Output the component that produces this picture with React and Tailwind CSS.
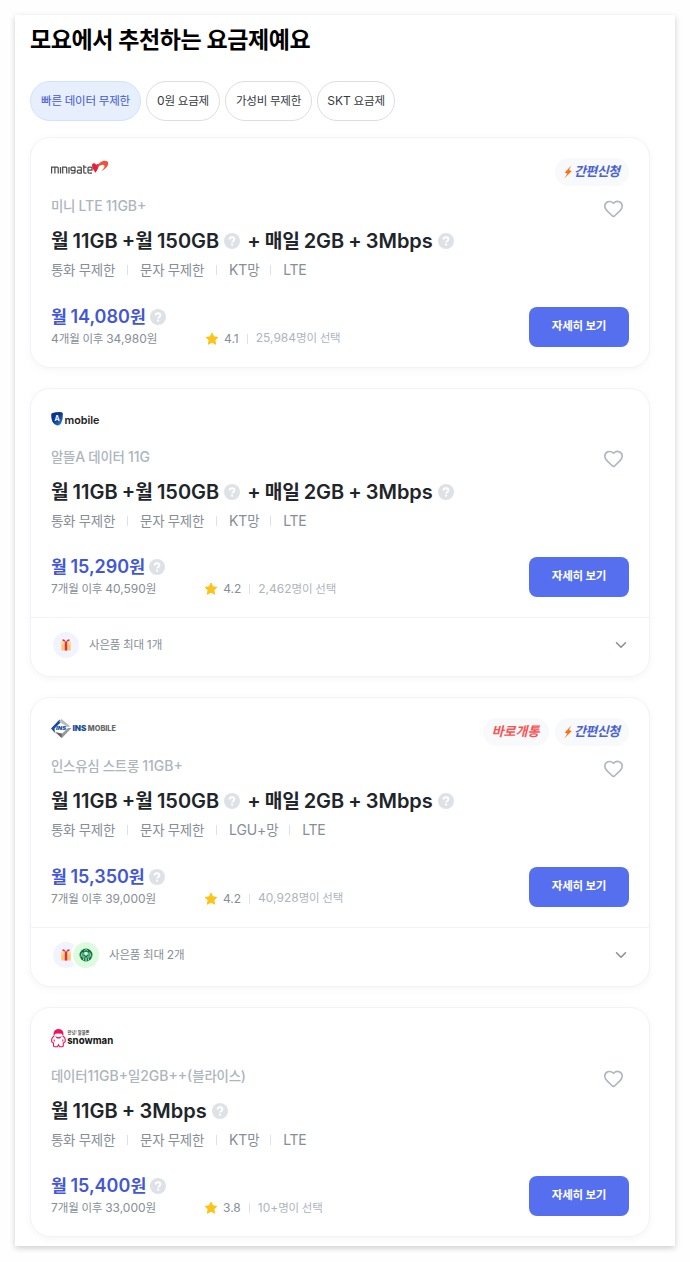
import React from 'react';
import { ChevronDown, Heart } from 'lucide-react';

const filters = [
  { label: '빠른 데이터 무제한', width: 'w-[111px]' },
  { label: '0원 요금제', width: 'w-[74px]' },
  { label: '가성비 무제한', width: 'w-[87px]' },
  { label: 'SKT 요금제', width: 'w-[78px]' },
];

const plans = [
  {
    logo: 'minigate',
    badges: ['easy'],
    name: '미니 LTE 11GB+',
    data: ['월 11GB +월 150GB', '+ 매일 2GB + 3Mbps'],
    network: 'KT망',
    price: '월 14,080원',
    after: '4개월 이후 34,980원',
    rating: '4.1',
    picked: '25,984명이 선택',
    gifts: [],
  },
  {
    logo: 'amobile',
    badges: [],
    name: '알뜰A 데이터 11G',
    data: ['월 11GB +월 150GB', '+ 매일 2GB + 3Mbps'],
    network: 'KT망',
    price: '월 15,290원',
    after: '7개월 이후 40,590원',
    rating: '4.2',
    picked: '2,462명이 선택',
    gifts: ['box'],
  },
  {
    logo: 'ins',
    badges: ['instant', 'easy'],
    name: '인스유심 스트롱 11GB+',
    data: ['월 11GB +월 150GB', '+ 매일 2GB + 3Mbps'],
    network: 'LGU+망',
    price: '월 15,350원',
    after: '7개월 이후 39,000원',
    rating: '4.2',
    picked: '40,928명이 선택',
    gifts: ['box', 'coffee'],
  },
  {
    logo: 'snowman',
    badges: [],
    name: '데이터11GB+일2GB++(블라이스)',
    data: ['월 11GB + 3Mbps'],
    network: 'KT망',
    price: '월 15,400원',
    after: '7개월 이후 33,000원',
    rating: '3.8',
    picked: '10+명이 선택',
    gifts: [],
  },
];

// Hangul sits a bit wide next to Inter, so its runs are tightened on their own
const Ko = ({ children }) =>
  children.split(/([가-힣]+)/).map((part, i) => (
    <span key={i} className={i % 2 ? 'text-[0.96em] tracking-[-0.018em]' : '[word-spacing:-0.04em]'}>{part}</span>
  ));

const Help = () => (
  <svg width="16" height="16" viewBox="0 0 16 16" className="shrink-0">
    <circle cx="8" cy="8" r="8" fill="#dee2e6" />
    <path d="M5.600 6.500C5.600 5 6.600 4.300 8 4.300s2.400.8 2.400 2c0 1-.6 1.400-1.300 1.900-.7.4-1 .7-1 1.400" fill="none" stroke="#fff" strokeWidth="1.900" />
    <circle cx="8.100" cy="11.700" r="1.150" fill="#fff" />
  </svg>
);

const Star = () => (
  <svg width="14" height="14" viewBox="0 0 14 14" className="shrink-0">
    <path d="M7 1.1l1.75 3.75 4.1.5-3 2.8.8 4.1L7 10.2l-3.65 2.05.8-4.1-3-2.8 4.1-.5z" fill="#fcc419" stroke="#fcc419" strokeLinejoin="round" />
  </svg>
);

const Divider = ({ className }) => <span className={`w-px bg-[#dee2e6] ${className}`} />;

const Logo = ({ type }) => {
  if (type === 'minigate') {
    return (
      <svg width="58" height="20" viewBox="0 0 58 20">
        <g fill="none" stroke="#4d4d4d" strokeWidth="1.250">
          <path d="M.6 15.500V9.100h5.600q1 0 1 1v5.400M3.900 9.100v6.400M9.500 9v6.500M11.700 15.500V9.100h3q1 0 1 1v5.400M18 9v6.500M24 9.100h-3q-1 0-1 1v1.400q0 1 1 1h3V9.100v4.900q0 1-1 1h-3M26.300 9.100h3q1 0 1 1V15h-3q-1 0-1-1v-1q0-1 1-1h3M32.800 7v7q0 1 1 1h1.700M32.800 9.100h2.700M37 12h4v-1.900q0-1-1-1h-2q-1 0-1 1V14q0 1 1 1h3" />
        </g>
        <path d="M41 7.500c0-2.500 2.800-3.200 4.300-.5.6-1 1.700-1.200 2.700-.5 0 2.500-1.300 5-3.500 8.300C43 12 41 10.500 41 7.500z" fill="#e81f3c" />
        <path d="M46 9.500C47.500 5 50.500 2.800 54 2.800c3.500 0 4 3 2.300 5.500-1.500 2.200-3.500 3.800-6 4.700 2.400-2 3.800-4.200 3-5.500-1-1.400-3.800-.6-7.300 2z" fill="#f0533a" />
      </svg>
    );
  }
  if (type === 'amobile') {
    return (
      <svg width="49" height="20" viewBox="0 0 49 20">
        <defs>
          <linearGradient id="shield" x1="0" x2="1" y2="1">
            <stop offset=".45" stopColor="#0b348f" />
            <stop offset="1" stopColor="#2997d8" />
          </linearGradient>
        </defs>
        <path d="M.2 5.500Q.2 4.300 1.500 4q4-1.200 9-.8 1.300.2 1.400 1.500.3 6-1.900 9.800-1.600 2.400-4 2-3.200-1-4.700-4Q0 9.500.2 5.500z" fill="url(#shield)" />
        <text x="3.600" y="11.900" fontFamily="Inter, sans-serif" fontWeight="700" fontSize="7" fill="#fff">A</text>
        <text x="13.500" y="14.800" textLength="35" lengthAdjust="spacingAndGlyphs" fontFamily="Inter, sans-serif" fontWeight="600" fontSize="11" fill="#222">mobile</text>
      </svg>
    );
  }
  if (type === 'ins') {
    return (
      <svg width="66" height="22" viewBox="0 0 66 22">
        <path d="M8.500 1.500L0 10.500l4 4.500-.5-4.500 6-6z" fill="#174f9c" />
        <path d="M8 3.500L10.500 1 19.500 8.500l-3 .5L9.500 4.500z" fill="#b9bcbf" />
        <path d="M20.500 10l-9.500 10L9 17.500l8-7.500z" fill="#97999b" />
        <path d="M4 14l7 1.500-.5 4.500z" fill="#656769" />
        <text x="5" y="12.300" textLength="10" lengthAdjust="spacingAndGlyphs" fontFamily="Inter, sans-serif" fontWeight="900" fontStyle="italic" fontSize="4.800" fill="#174f9c">INS</text>
        <text x="21.500" y="12.700" textLength="14" lengthAdjust="spacingAndGlyphs" fontFamily="Inter, sans-serif" fontWeight="900" fontSize="7.500" fill="#174f9c">INS</text>
        <text x="36.800" y="12.700" textLength="28.200" lengthAdjust="spacingAndGlyphs" fontFamily="Inter, sans-serif" fontWeight="800" fontSize="7.500" fill="#666">MOBILE</text>
      </svg>
    );
  }
  return (
    <svg width="63" height="20" viewBox="0 0 63 20" className="overflow-visible">
      <g fill="none" stroke="#ed145b" strokeWidth="1.100">
        <path d="M3.200 7.500C2.500 4 4.500 1.500 7.500 1.500S12.500 4 11.800 7.500" />
        <path d="M3.200 8C.8 9.500.2 11.500.8 14l1.700 1v2.500q0 1.500 2.500 1.300h1.500l1-2 1 2H10q2.300.2 2.300-1.300V15l1.700-1c.8-2.500 0-4.500-2.300-6" />
        <path d="M3.200 11.500v2M11.800 11.500v2" />
      </g>
      <path d="M3 6.500C2.600 3.500 5 1.500 7.500 1.500S12.400 3.500 12 6.500l-1.500-.7-3-.3-3 .3zM4 8.200l3.500 1.100L11 8.200 9 10.500H6z" fill="#ed145b" />
      <text x="16.500" y="5.600" textLength="22" lengthAdjust="spacingAndGlyphs" fontFamily="Noto Sans CJK KR, sans-serif" fontWeight="500" fontSize="4.800" fill="#333">안녕! 알뜰폰</text>
      <text x="16.200" y="15.700" textLength="46" lengthAdjust="spacingAndGlyphs" fontFamily="Inter, sans-serif" fontWeight="700" fontSize="11" fill="#111">snowman</text>
    </svg>
  );
};

const Badge = ({ type }) => (
  <div className="flex h-7 items-center rounded-full bg-[#f8f9fa] pl-[9px] pr-[9.500px] pb-0.5 text-[13px] font-bold italic leading-5">
    {type === 'easy' ? (
      <>
        <svg width="8" height="14" viewBox="0 0 8 14" className="mr-0.5 mt-0.5">
          <path d="M7.200.6L.8 7.800l2.600.8L.3 13.400 7.700 5.900 5 5.100z" fill="#fd6f0c" />
        </svg>
        <span className="tracking-[-0.045em] text-[#4a63d3]">간편신청</span>
      </>
    ) : (
      <span className="text-[#fa5252]">바로개통</span>
    )}
  </div>
);

const Gift = ({ type }) => (
  <div className={`flex size-[30px] items-center justify-center rounded-full border-2 border-white ${type === 'box' ? 'bg-[#f1f3ff]' : '-ml-2.5 bg-[#defbe0]'}`}>
    {type === 'box' ? (
      <svg width="12" height="12" viewBox="0 0 12 12">
        <path d="M1.300 4.500h9.400V11q0 .6-.6.6H1.900q-.6 0-.6-.6z" fill="#fdc779" />
        <path d="M.8 2.500h10.400v2.800H.8z" fill="#ffdc9c" />
        <path d="M4.800 2.500h2.400v9.100H4.800zM5.800 2.800C4.500.2 2.500-.2 2.300 1c-.1 1.100 1.500 1.700 3.500 1.800zM6.200 2.800C7.500.2 9.500-.2 9.700 1c.1 1.100-1.500 1.700-3.500 1.800z" fill="#dc2f45" />
      </svg>
    ) : (
      <svg width="14" height="14" viewBox="0 0 14 14">
        <circle cx="7" cy="7" r="6.500" fill="#087443" />
        <g fill="none" stroke="#defbe0" strokeWidth=".7">
          <path d="M5 4.500C3 6 4.800 7.500 3.500 9.500M9 4.500c2 1.500.2 3 1.500 5M3.500 4.500C1.700 6.500 3 7.500 1.800 9M10.500 4.500c1.800 2 .5 3 1.700 4.500M5.300 8c-.8 1.500-.3 3-1 4.500M8.700 8c.8 1.500.3 3 1 4.500" />
          <path d="M5.200 2.800L7 1.500l1.800 1.300" />
        </g>
        <path d="M5.200 4.400q1.800-1.500 3.600 0v2.200Q7 8.800 5.200 6.600zM6.500 9.500h1V13h-1z" fill="#defbe0" />
      </svg>
    )}
  </div>
);

const PlanCard = ({ plan }) => (
  <article className="rounded-[20px] border border-[#f1f3f5] bg-white shadow-[0_2px_8px_rgba(0,0,0,0.04)]">
    <div className="h-[228.300px] px-5 pt-5">
      <div className="flex h-7 items-start justify-between">
        <Logo type={plan.logo} />
        <div className="flex gap-1.5">
          {plan.badges.map((b) => <Badge key={b} type={b} />)}
        </div>
      </div>
      <div className="flex h-[41px] justify-between pt-[9px]">
        <p className="text-sm font-medium leading-[21px] text-[#adb5bd]"><Ko>{plan.name}</Ko></p>
        <Heart size={21} strokeWidth={1.8} className="mr-[5px] mt-[2.800px] text-[#adb5bd]" />
      </div>
      <h2 className="flex h-7 items-center text-xl font-semibold leading-7 text-[#212529]">
        {plan.data.map((d, i) => (
          <span key={d} className={`flex items-center gap-[5px] ${i ? 'ml-[7px] tracking-[-0.003em]' : ''}`}>
            <span><Ko>{d}</Ko></span>
            <Help />
          </span>
        ))}
      </h2>
      <div className="mt-[5px] flex h-5 items-center text-sm text-[#868e96]">
        <span><Ko>통화 무제한</Ko></span>
        <Divider className="mx-3 h-2.5" />
        <span><Ko>문자 무제한</Ko></span>
        <Divider className="mx-3 h-2.5" />
        <span className="mr-[-1px] tracking-[-0.01em]"><Ko>{plan.network}</Ko></span>
        <Divider className="mx-3 h-2.5" />
        <span className="tracking-[-0.02em]">LTE</span>
      </div>
      <div className="mt-[22.400px] flex justify-between">
        <div className="pt-[0.600px]">
          <div className="flex h-[27px] items-center gap-[4.500px] text-lg font-semibold text-[#4357d5]">
            <span><Ko>{plan.price}</Ko></span>
            <Help />
          </div>
          <div className="flex h-[17px] items-center text-xs text-[#868e96]">
            <span><Ko>{plan.after}</Ko></span>
            <span className="ml-12 flex items-center">
              <Star />
              <span className="ml-[5px] text-[#868e96]">{plan.rating}</span>
              <Divider className="mx-2 h-2.5" />
              <span className="pb-px text-[#adb5bd]"><Ko>{plan.picked}</Ko></span>
            </span>
          </div>
        </div>
        <button className="mt-1 h-10 w-[100px] rounded-lg bg-[#566fef] pb-0.5 text-xs font-bold text-white"><Ko>자세히 보기</Ko></button>
      </div>
    </div>
    {plan.gifts.length > 0 && (
      <div className="flex h-[59.350px] items-center border-t border-[#f1f3f5] px-5 pb-1">
        {plan.gifts.map((g) => <Gift key={g} type={g} />)}
        <span className="ml-2 text-xs text-[#868e96]"><Ko>{`사은품 최대 ${plan.gifts.length}개`}</Ko></span>
        <ChevronDown size={18} strokeWidth={2} className="ml-auto mr-[-1px] text-[#868e96]" />
      </div>
    )}
  </article>
);

export default function App() {
  return (
    <div className="h-[1262px] w-[690px] overflow-hidden bg-[#fefefe] p-[15px] font-['Inter','Noto_Sans_CJK_KR',sans-serif]">
      <main className="h-[1231px] w-[660px] bg-white pl-[15px] pr-[25px] pt-[7px] shadow-[0_2px_6px_rgba(0,0,0,0.2)]">
        <h1 className="h-9 text-2xl font-semibold leading-9 text-black"><Ko>모요에서 추천하는 요금제예요</Ko></h1>
        <nav className="mt-[23px] flex gap-[5px]">
          {filters.map((f, i) => (
            <button
              key={f.label}
              className={`h-10 whitespace-nowrap rounded-full border text-xs ${f.width} ${i === 0 ? 'border-[#d0e2fc] bg-[#e7effd] text-[#4357d5]' : 'border-[#dcdee0] bg-white text-[#343a40]'}`}
            >
              <Ko>{f.label}</Ko>
            </button>
          ))}
        </nav>
        <div className="mt-[16.400px] flex flex-col gap-5">
          {plans.map((plan) => <PlanCard key={plan.logo} plan={plan} />)}
        </div>
      </main>
    </div>
  );
}
